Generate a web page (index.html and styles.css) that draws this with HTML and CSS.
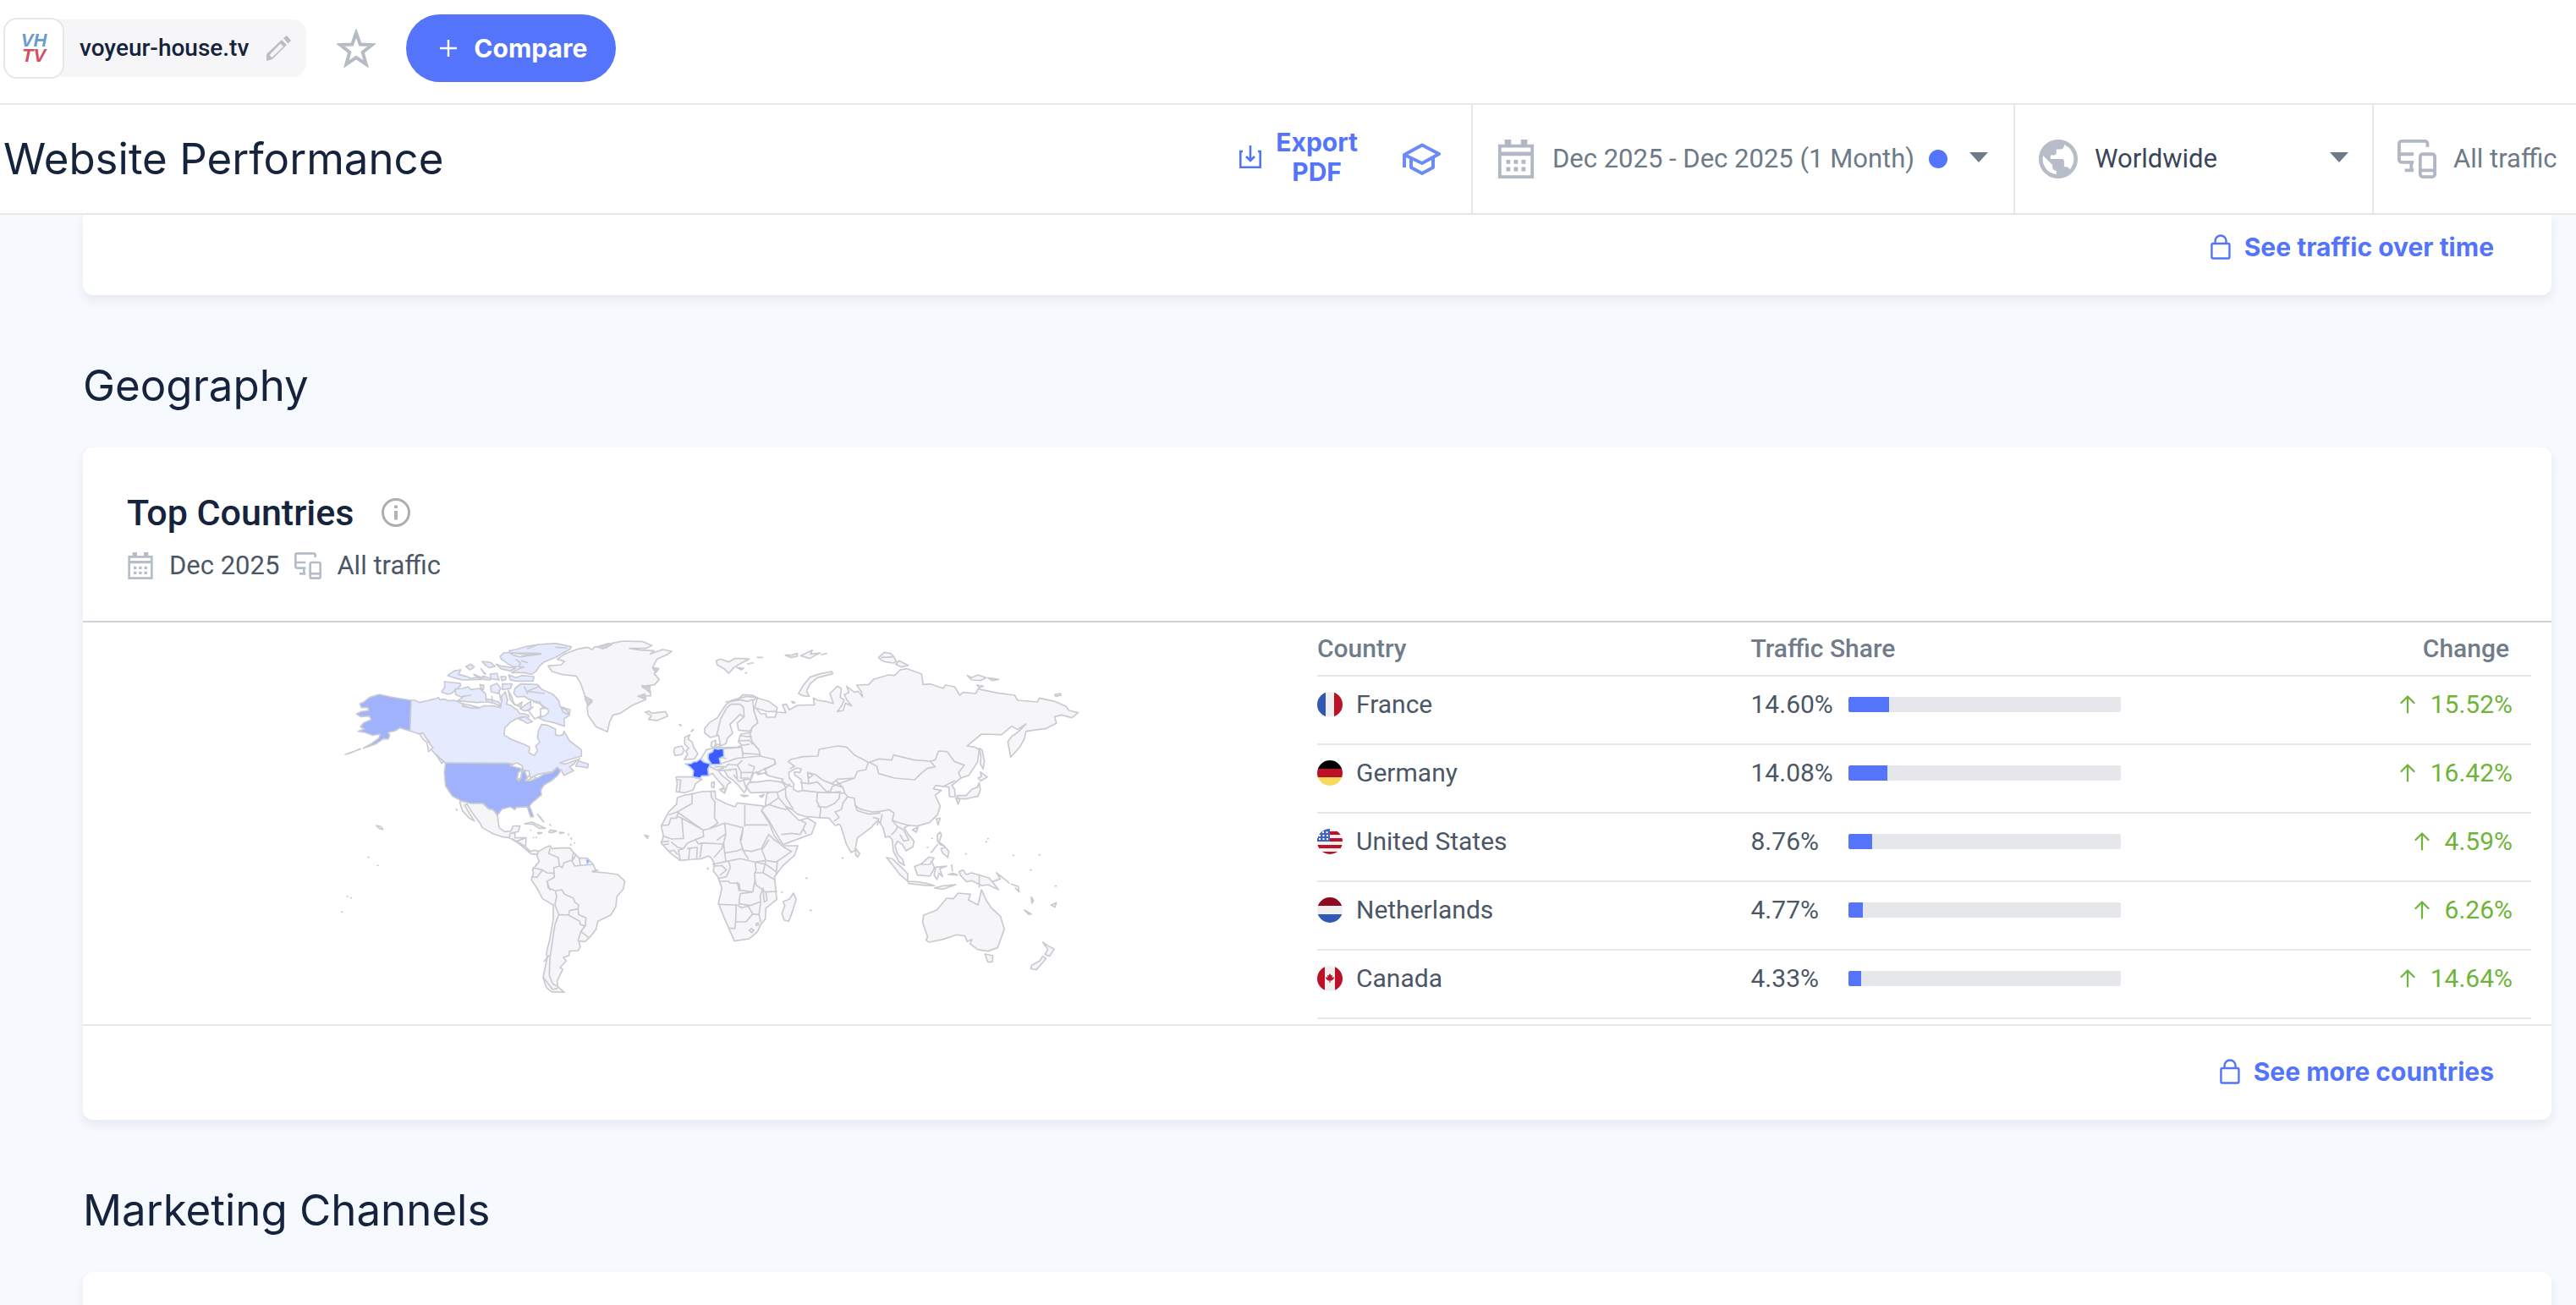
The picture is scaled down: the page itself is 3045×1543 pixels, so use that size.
FILE: index.html
```html
<!DOCTYPE html>
<html lang="en">
<head>
<meta charset="utf-8">
<meta name="viewport" content="width=device-width, initial-scale=1">
<title>Website Performance</title>
<link rel="stylesheet" href="styles.css">
</head>
<body>
<svg class="sprite" aria-hidden="true">
  <symbol id="i-calendar" viewBox="0 0 24 24"><path fill="currentColor" fill-rule="evenodd" d="M1 3h4V0h4v3h6V0h4v3h4v21H1zM3 5v2.500h18V5zM3 10v12h18V10zM6 12.500h2.500V15H6zm4.700 0h2.500V15h-2.500zm4.700 0h2.500V15h-2.500zM6 17h2.500v2.500H6zm4.700 0h2.500v2.500h-2.500zm4.700 0h2.500v2.500h-2.500z"/></symbol>
  <symbol id="i-devices" viewBox="0 0 24 24"><g fill="none" stroke="currentColor" stroke-width="2"><path d="M18.500 4.500V2.500a1.500 1.500 0 0 0-1.500-1.500H2.500A1.500 1.500 0 0 0 1 2.500v10A1.500 1.500 0 0 0 2.500 14H10M1 9h9M8.500 14v5M4.500 19H10"/><rect x="14" y="9" width="9" height="14" rx="1.500"/><path d="M14 19h9"/></g></symbol>
  <symbol id="i-lock" viewBox="0 0 24 30"><g fill="none" stroke="currentColor" stroke-width="2.400"><rect x="1.400" y="11" width="21" height="17.500" rx="1.500"/><path d="M5.500 11V8a6.500 6.500 0 0 1 13 0v3"/></g></symbol>
  <symbol id="i-up" viewBox="0 0 18 22"><path fill="none" stroke="currentColor" stroke-width="2.200" stroke-linecap="round" stroke-linejoin="round" d="M9 20.500V2M1.500 9 9 1.500 16.500 9"/></symbol>
  <symbol id="i-caret" viewBox="0 0 22 12"><path fill="currentColor" d="M0 0h22L11 12z"/></symbol>
</svg>

<div class="topbar">
  <div class="site">
    <span class="site-logo"><span class="logo-vh">VH</span><span class="logo-tv">TV</span></span>
    <span class="site-name">voyeur-house.tv</span>
    <button class="icon-btn" aria-label="Edit website">
      <svg class="pencil" viewBox="0 0 30 30"><path fill="#bbbdc1" fill-rule="evenodd" d="M1 30V22L19 5l6 6L8 28zM4.500 23l3 3L21 13l-3.500-3.500zM21 3l4-3 5 6-3.500 3.500z"/></svg>
    </button>
  </div>
  <button class="icon-btn" aria-label="Add to favorites">
    <svg class="star" viewBox="0 0 46 46"><path fill="none" stroke="#b6bcc5" stroke-width="4" d="M23 5l4.800 13.500 14 .5-11.100 8.700 4 14.300L23 34l-11.700 8 4-14.300L4.200 19l14-.5z"/></svg>
  </button>
  <button class="compare">
    <svg class="plus" viewBox="0 0 20 20"><path stroke="#fff" stroke-width="2.400" d="M10 0v20M0 10h20"/></svg>
    <span>Compare</span>
  </button>
</div>

<header class="header">
  <h1 class="title">Website Performance</h1>
  <button class="export">
    <svg class="download" viewBox="0 0 26 28"><path fill="none" stroke="currentColor" stroke-width="2.600" d="M4 7H1.300v18.700h23.400V7H22M13 0v18M8 13l5 5 5-5"/></svg>
    <span>Export<br>PDF</span>
  </button>
  <button class="icon-btn learn" aria-label="Learn more">
    <svg class="grad" viewBox="0 0 46 38"><path fill="none" stroke="#6b8cf5" stroke-width="4" stroke-linejoin="round" d="M3 14 24 2.500 44 13 24 24zM3 14v15M11 18v11l13 7 13-7V18"/></svg>
  </button>
  <div class="filter filter-date">
    <svg class="filter-icon" aria-hidden="true"><use href="#i-calendar"/></svg>
    <select class="filter-select" aria-label="Date range"><option>Dec 2025 - Dec 2025 (1 Month)</option></select>
    <span class="dot"></span>
    <svg class="caret"><use href="#i-caret"/></svg>
  </div>
  <div class="filter filter-country">
    <svg class="filter-icon" viewBox="2 2 20 20"><path fill="#b6bcc8" d="M12 2C6.480 2 2 6.480 2 12s4.480 10 10 10 10-4.480 10-10S17.520 2 12 2zm-1 17.930c-3.950-.49-7-3.850-7-7.930 0-.62.080-1.210.210-1.790L9 15v1c0 1.100.9 2 2 2v1.930zm6.900-2.540c-.26-.81-1-1.390-1.900-1.390h-1v-3c0-.55-.45-1-1-1H8v-2h2c.55 0 1-.45 1-1V7h2c1.100 0 2-.9 2-2v-.41c2.930 1.190 5 4.060 5 7.410 0 2.080-.8 3.970-2.100 5.390z"/></svg>
    <select class="filter-select dark grow" aria-label="Country"><option>Worldwide</option></select>
    <svg class="caret"><use href="#i-caret"/></svg>
  </div>
  <div class="filter filter-traffic">
    <svg class="filter-icon"><use href="#i-devices"/></svg>
    <select class="filter-select" aria-label="Traffic source"><option>All traffic</option></select>
  </div>
</header>

<main class="content">
  <section class="card card-cut">
    <a class="more" href="#traffic"><svg class="lock"><use href="#i-lock"/></svg>See traffic over time</a>
  </section>

  <h2 class="section-title">Geography</h2>
  <section class="card">
    <div class="card-head">
      <h3 class="card-title">Top Countries
        <svg class="info" viewBox="0 0 34 34"><circle cx="17" cy="17" r="15.500" fill="none" stroke="#adadad" stroke-width="3"/><path fill="#b3b3b3" d="M15 8.500h4v3.500h-4zM15 15h4v10.500h-4z"/></svg>
      </h3>
      <div class="card-meta">
        <svg class="meta-icon"><use href="#i-calendar"/></svg><span class="meta-date">Dec 2025</span>
        <svg class="meta-icon"><use href="#i-devices"/></svg><span>All traffic</span>
      </div>
    </div>
    <div class="card-body">
      <svg class="map" viewBox="98 736 1459 475" role="img" aria-label="Traffic by country">
        <g class="land" transform="translate(390 740) scale(.3333)">
          <path class="us" d="M288 264L250 258 215 252 175 243 140 254 118 272 106 276 112 290 134 290 138 300 112 304 94 312 108 322 140 320 146 332 120 344 108 358 122 366 100 374 124 378 150 388 178 384 174 398 150 416 118 434 160 420 190 400 206 402 212 388 206 378 232 372 248 362 284 373Z"/>
          <path d="M54 456L106 438 108 436 70 452Z"/>
          <path class="ca" d="M288 264L302 264 318 272 350 264 378 258 385 254 390 262 408 260 420 266 440 264 470 276 472 286 500 288 528 292 545 284 580 284 604 290 610 264 608 250 622 234 630 262 626 278 640 282 664 298 672 310 690 312 706 318 700 332 684 322 664 328 640 342 620 362 618 388 646 404 688 420 708 430 706 450 724 460 736 444 730 426 744 412 736 396 740 370 750 350 770 352 800 366 800 386 812 390 826 386 830 374 850 408 892 440 892 462 850 474 816 486 836 490 878 474 866 490 850 500 864 514 830 530 822 514 806 502 788 518 740 526 712 540 704 520 680 506 662 494 634 488 410 486 380 462 360 440 352 410 318 384 284 373Z"/>
          <path d="M318 382L330 380 356 420 366 432 350 446 344 414 330 402Z"/>
          <path class="us" d="M410 486L634 488 662 498 680 506 668 522 664 542 670 550 678 540 680 514 698 520 700 540 692 550 712 548 740 538 760 526 788 520 806 502 818 514 808 530 790 546 760 564 748 582 750 600 716 628 708 640 722 676 712 678 700 642 660 644 656 652 640 642 610 650 594 672 578 652 564 650 542 630 500 630 468 622 434 604 410 568 406 520Z"/>
          <path class="lake" d="M640 496L662 486 682 496 684 508 660 502ZM664 546L668 520 682 512 676 540ZM690 514L706 514 708 530 700 538ZM702 548L724 534 730 540 712 550Z"/>
          <path class="ca" d="M886 470L872 498 896 500 914 504 916 490 902 486 894 484 880 478ZM376 456L404 482 396 488ZM656 222L676 206 736 208 752 226 790 242 812 266 816 286 852 298 848 318 830 330 832 356 796 344 760 336 740 326 764 318 776 306 772 294 754 290 744 270 726 268 704 260 690 250 664 252 652 240ZM820 290L840 300 850 316 826 306ZM668 330L694 322 718 340 700 346 688 338ZM700 276L712 268 712 296 692 302 674 294ZM444 224L470 222 490 216 500 226 530 222 552 240 556 270 520 272 480 268 452 266 470 254 446 244ZM406 198L462 204 464 212 430 240 416 242 396 234 408 216ZM532 208L546 212 544 226 536 222ZM570 214L592 204 606 222 596 240 572 234ZM612 206L646 206 640 222 612 226ZM632 228L644 250 654 280 664 282 682 270 676 288 652 276 640 262ZM552 258L570 262 600 270 606 286 580 274 560 270ZM470 276L500 282 530 290 500 292 474 284ZM418 176L440 160 464 156 456 172 480 178 500 186 526 182 540 190 470 192 440 184ZM510 172L526 186 540 184ZM542 178L570 186 568 192 546 190ZM568 172L592 168 600 192 572 188ZM606 180L624 180 624 190 610 194ZM634 174L660 184 680 176 724 180 720 196 660 196 640 192ZM482 144L500 136 512 146 496 156ZM540 126L570 130 586 144 564 148 552 140ZM536 152L552 172 546 168ZM590 136L606 142 660 150 640 160 606 152ZM640 96L636 88 660 84 700 72 740 66 800 62 856 74 852 82 800 112 760 128 742 144 732 160 716 172 690 166 644 166 670 152 688 146 650 144 630 134 608 118 604 108 616 96 636 94 650 104 674 110 748 100 690 102Z"/>
          <path class="line" d="M640 96L690 96 748 98 680 108M660 120L676 132 670 144M700 130L680 124M740 66L700 80M800 76L840 78M690 216L700 240M740 216L700 232 760 240M470 250L500 246M722 270L744 276 768 292 746 294 748 320 726 330 704 300 720 288M574 250L576 270M600 236L606 264"/>
          <path d="M774 142L820 138 832 126 806 118 832 100 880 82 912 76 930 84 940 74 980 78 1000 62 1040 54 1110 56 1142 70 1120 80 1062 80 1100 86 1150 88 1136 100 1180 84 1212 90 1196 102 1160 118 1144 148 1164 152 1150 170 1168 190 1152 208 1128 212 1108 218 1136 230 1138 248 1096 250 1120 262 1072 282 1030 310 1004 316 992 340 984 376 944 358 916 318 912 286 930 270 906 264 904 246 890 206 874 178 820 172 788 162ZM1118 306L1132 302 1140 310 1190 304 1198 320 1160 336 1130 332 1140 320Z"/>
          <path class="blot" d="M950 74L990 62 1000 66 968 82ZM1106 212L1136 216 1132 234ZM1092 250L1116 242 1120 256ZM904 250L930 264 914 282ZM1146 152L1166 152 1156 166Z"/>
          <path d="M460 624L468 622 500 630 542 630 564 650 578 652 594 672 600 716 620 730 642 728 650 710 674 710 668 730 650 734 636 752 610 748 580 738 540 716 534 702 500 656 486 632 478 636 494 664 512 692 494 682 470 656Z"/>
          <path d="M636 752L640 736 656 734 656 752 696 752 694 784 710 800 726 796 740 800 738 812 712 808 686 786 664 768ZM648 756L662 764 694 752M668 768L694 784"/>
          <path d="M690 702L716 696 764 718 742 718 720 704ZM776 732L782 724 804 728 786 734ZM736 734L752 734 742 738ZM814 732L830 734 816 736ZM736 668L756 694M744 676L758 696M846 738v4M856 752v5M854 774v4M868 769v2M722 750v2M732 749v2M712 724v1M780 705l2 3M448 650l3 4"/>
          <path d="M740 800L764 786 780 780 788 790 820 788 852 788 864 804 884 824 912 824 934 846 942 866 930 872 980 876 1020 882 1046 906 1040 934 1018 960 1014 996 996 1026 950 1048 944 1076 922 1104 904 1120 882 1118 888 1138 880 1152 850 1154 848 1170 828 1176 838 1188 816 1212 826 1218 806 1260 808 1280 832 1300 786 1298 768 1284 756 1248 770 1180 768 1160 780 1110 792 1040 792 990 754 968 734 930 714 900 722 876 718 866 742 836 734 814Z"/>
          <path class="line" d="M780 790L776 808 810 822 814 852 794 858 796 892M720 858L754 866 770 876 796 878M754 866L734 892 716 890M864 804L858 832 830 840 824 858 814 852M858 832L868 852 934 846M884 824L888 850M870 816L862 830M796 892L770 906 774 930 800 940 804 960 798 990M770 906L780 936M800 940L822 936 832 952 864 966 868 980 882 990 880 1004 850 1010 846 1026 812 1024 798 990M880 1004L882 1024 908 1036 906 1064 888 1060 886 1048 846 1026M812 1024L798 1060 792 1100 780 1180 778 1240 790 1270 808 1280M906 1064L890 1084 918 1106M890 1084L880 1116M934 872L950 866M760 1190L776 1170M756 1246L790 1290 806 1286"/>
          <path class="hot" d="M910 826L920 834 912 846Z"/>
          <path d="M164 708L180 712 188 722 176 720ZM135 821h3M168 850h3M60 960h3M74 965h2M42 1015h3M1116 742L1130 746 1126 754ZM1240 350l6 4M1282 374l6-6M1340 860v3"/>
        </g>
        <g class="land" transform="translate(760 740) scale(.338 .3333)">
          <path d="M146 396L164 386 158 402 172 412 178 432 192 454 180 472 144 474 156 456 150 444 160 434 146 420ZM112 432L136 426 144 442 136 456 112 460 108 444Z"/>
          <path d="M116 536L172 536 206 544 184 560 176 582 146 592 116 588 120 560ZM120 546L132 546 128 588"/>
          <path d="M202 472L222 440 250 432 330 430 346 424 334 410 342 384 390 376 384 414 406 440 410 460 464 474 460 492 424 508 430 518 460 532 436 542 400 520 384 524 376 544 352 546 362 580 354 592 334 566 316 548 296 534 284 512 264 514 276 530 308 556 296 562 288 588 272 580 284 572 256 540 244 524 226 530 220 490Z"/>
          <path d="M240 412L254 406 254 420 248 434 238 426ZM256 420L268 420 266 430 256 430ZM240 556L250 554 248 574 240 572ZM268 580L288 578 286 594ZM342 600L368 602 354 606ZM408 604L424 598 416 608Z"/>
          <path d="M216 364L232 344 260 326 290 280 310 264 362 250 400 254 384 266 388 300 402 344 372 374 334 370 330 344 352 324 340 314 304 350 314 380 296 398 290 418 272 426 264 388 236 396 216 380Z"/>
          <path class="line" d="M258 388L272 330 294 290 308 278 340 278 352 290 354 324M308 268L340 262 366 268 384 262M290 270L330 262 350 244 384 246 400 258"/>
          <path d="M400 256L440 268 470 290 466 304 434 304 396 292 412 312 430 312 432 324 462 324 468 306 500 308 488 280 502 278 512 298 540 282 600 280 596 256 610 264 640 268 666 276 654 240 680 214 694 222 690 254 704 262 694 286 680 304 700 300 708 274 730 284 714 264 704 244 720 236 712 214 740 236 752 232 768 252 764 234 748 210 790 208 806 190 858 174 880 176 900 156 924 152 974 170 980 208 1006 206 1050 222 1058 210 1090 216 1108 246 1120 236 1164 240 1172 224 1240 238 1300 246 1310 264 1380 270 1386 256 1440 268 1480 286 1490 300 1522 308 1500 326 1464 316 1440 322 1446 346 1410 364 1340 374 1334 400 1318 430 1286 466 1276 410 1290 392 1312 376 1340 348 1310 368 1290 356 1254 386 1184 384 1134 426 1160 430 1176 440 1170 484 1140 530 1112 540 1080 566 1090 580 1092 606 1072 606 1070 572 1050 570 1024 566 1016 578 1044 584 1022 600 1040 640 1030 670 1002 698 960 710 930 708 914 716 928 740 948 764 944 784 920 798 908 776 890 764 882 780 890 810 908 828 914 850 896 838 876 800 872 760 862 746 848 750 840 716 822 690 806 706 800 714 750 752 742 796 728 804 712 776 692 710 686 704 672 708 650 682 610 680 566 676 540 668 520 650 500 644 524 668 546 690 576 682 604 700 590 738 490 776 480 760 440 690 414 652 428 640 432 600 440 590 376 592 362 570 370 556 400 552 420 544 486 550 500 562 440 536 424 510 464 490 460 474 410 462 406 440 384 414 374 390 382 360 402 344 388 300Z"/>
          <path class="sea" d="M386 524L398 518 402 528 424 522 440 532 490 544 484 554 440 548 400 554 374 554ZM398 522L424 508 432 518 418 524ZM510 520L538 504 554 508 548 520 530 518 530 528 554 546 558 584 542 588 526 580 528 560 512 540ZM576 520L580 540 594 530Z"/>
          <path class="line" d="M516 506L530 498 508 482 516 474 560 464 612 462 616 438 682 426 712 430 740 458 788 484 780 510 750 516 740 540 680 544 660 560 630 548 604 528 576 520 580 560 552 556M792 484L826 472 870 476 876 458 950 476 1004 480 1022 500 994 506 970 526 950 546 880 540 824 524 818 498 792 484M1022 476L1004 480M1022 476L1034 444 1064 446 1090 482 1124 494 1104 520 1112 540M580 560L610 554 642 588 656 586 662 570 696 556 740 540M660 560L700 574 706 594 656 590M700 574L676 550M558 584L610 590 608 622 622 650 618 680M610 590L650 592 690 588 686 612 670 630 640 644 612 640M706 594L716 606 700 628 694 652 672 660 686 680 670 692M716 606L740 612 742 636 760 650 800 660 830 658 860 652 878 664 872 690 900 700 930 708M742 636L750 656 790 668 828 664M806 680L824 684 820 706M836 670L830 700M872 690L890 712 884 726 870 740M890 712L912 724 930 760 912 764 900 742M1050 570L1090 550M512 562L498 576 500 608 524 648M490 556L500 576 470 590 440 590M470 590L474 610 440 634 428 640M474 610L500 640 520 650M440 634L470 644 500 652M486 740L520 736 550 740 570 700 552 690M570 736L560 720M500 562L520 570"/>
          <path class="line" d="M270 490L300 480 328 470 346 468 410 462M280 436L346 430M346 430L350 468M290 470L270 466M300 492L330 494 346 478M330 494L344 520 384 520M300 510L326 508 330 540M344 520L342 540 370 540M342 390L380 394M336 408L372 406 384 420M346 436L350 452 410 456M252 500L290 500 300 490M370 492L390 500 384 520M284 512L306 512M346 424L372 420M318 530L336 552 352 548M236 500L260 512 282 504"/>
          <path d="M256 124L270 118 300 128 320 116 352 116 372 118 340 134 318 148 300 168 284 152 260 138ZM328 148L352 150 344 156ZM400 112L418 112M366 134l6 2M376 132h10M358 168l4-2M498 104L520 104 540 98 540 108 516 112ZM552 106L580 92 592 86 586 100 620 96 600 106 584 116ZM624 102L642 98M824 112L844 94 866 98 878 110 886 126 876 132 850 128 834 122ZM884 136L896 124 928 140 904 146ZM834 112L876 110M544 240L560 212 584 182 620 170 660 162 664 170 610 184 584 206 572 232 582 250 560 248ZM1134 176L1150 184 1172 174 1200 184 1180 194 1150 192ZM1206 184L1244 190 1220 194ZM1168 210L1190 214 1176 220ZM1440 244L1460 240 1462 246 1444 250ZM520 268L532 272 524 274Z"/>
          <path d="M1176 434L1186 440 1194 480 1190 508 1180 490 1182 462ZM1180 518L1204 536 1182 550 1172 540 1184 534ZM1176 556L1180 582 1172 604 1146 610 1128 614 1104 612 1098 602 1130 602 1150 580 1170 572ZM1094 610L1108 616 1102 632ZM1026 684L1040 682 1032 706ZM942 724L962 714 956 732ZM1030 740L1040 732 1044 742 1036 768 1056 782 1040 776 1030 764ZM1042 790L1058 786 1070 800 1066 822 1048 806ZM1008 804L1030 776M744 790L758 808 750 820 744 812Z"/>
          <path d="M852 822L872 826 910 862 926 880 926 906 900 884 874 850ZM926 906L960 908 994 914 1020 922 980 920 930 914ZM1020 930L1050 922 1094 918 1050 934ZM950 854L974 844 1000 820 1018 824 1010 836 1020 858 1004 888 960 884ZM974 846L1004 846 1010 834M1024 856L1062 852 1038 862 1048 890 1036 878 1028 900 1018 884ZM1068 882L1100 884 1084 878ZM1080 848L1082 870M1106 872L1120 866 1130 882 1150 876 1210 894 1222 908 1244 936 1206 918 1186 922 1150 904 1132 908 1110 884ZM1176 884V926M1222 908L1250 898 1238 878M1236 876L1262 896 1280 912M1288 916L1312 924 1316 944 1302 930M1358 962L1366 974 1360 984ZM1334 1008L1358 1022 1350 1024ZM1428 990L1446 982 1440 998Z"/>
          <path d="M982 1026L1028 1008 1062 966 1086 968 1102 948 1146 952 1138 972 1172 990 1184 936 1200 972 1218 1000 1250 1030 1264 1076 1240 1142 1206 1154 1170 1148 1144 1128 1150 1112 1134 1120 1126 1100 1096 1096 1050 1112 1000 1122 990 1114 996 1104 978 1052ZM1196 1164L1224 1170 1222 1192 1206 1192ZM1398 1122L1418 1136 1438 1146 1422 1172 1406 1166 1416 1148ZM1398 1172L1410 1180 1390 1204 1376 1220 1356 1216 1360 1204 1388 1188Z"/>
          <path d="M146 600L160 598 206 588 252 586 254 612 290 630 322 642 330 628 412 638 424 640 414 656 442 700 458 742 486 780 542 780 530 814 490 850 460 890 468 970 430 1002 428 1040 412 1060 400 1086 372 1110 320 1118 300 1072 286 1040 264 984 276 930 262 890 246 870 250 844 240 824 228 816 206 826 176 828 130 832 96 806 76 784 64 770 72 746 64 710 90 660 118 632 120 610Z"/>
          <path class="line" d="M172 598L172 630 120 660 92 670M120 660L210 724 232 720 286 700 350 716M122 664L118 682 98 682 90 706 66 708M118 676L136 682 142 754 100 756 72 746M136 682L210 724 212 748 184 758 156 770 142 790 122 786 100 768M238 590L240 610 252 624 250 680 262 700M356 638V710M356 706H436M350 720L340 760 350 796 380 800 414 790 440 740M286 700L290 740 282 770 286 806 330 798 350 790M184 758L194 774 206 770 280 774M206 770L200 820M190 786L188 824M164 788L160 826M142 790L124 796 130 830M156 790L186 786M280 774L276 790 250 820M286 806L290 836 244 846M290 836L340 826 392 838 430 832 466 838 520 800 490 784M350 796L368 826M414 790L430 832M440 740L460 760 484 776M440 760L420 790M300 836L306 856 292 890 264 896M250 852L276 850 292 866 270 884M392 838L396 866 390 880 392 900 384 944 340 938 336 914 304 912 300 906 270 906M392 838L430 846 466 872M470 838L466 880M430 832L420 876 396 876M420 876L460 900M392 900L396 920 430 944 468 942M384 944L340 950 336 986 376 992 412 978 410 958 420 930M264 988L330 990 344 1000 370 994M326 994L324 1050 322 1074 304 1072M324 1050L360 1050 384 1022 368 994M384 1022L406 1024 412 978M406 1024L412 1050M420 930L424 980 434 974 430 944M372 1080L380 1074 388 1080 380 1088ZM64 766L90 764M74 776L90 774M92 800L108 796 120 810M286 740L260 760M344 760L350 720M262 700L232 720M330 910L336 940M396 1056l8-2v8h-8z"/>
          <path d="M526 948L536 970 524 1010 510 1048 494 1044 486 1020 496 992 490 978 512 970Z"/>
          <path d="M697 824h3M570 895h4M484 945h4M585 1009h4M1128 809h2M1200 767l2-2M1206 755h2M1294 814h3M1385 812h3M1355 866h3M1442 923h3M1010 754h2M994 786h4M128 350l6 4M170 374l6-6M226 861h3"/>
          <path class="hot" d="M148 489L168 489 178 482 188 482 200 472 214 484 236 490 227 508 230 532 206 532 200 540 174 536 177 514 164 500ZM229 454L244 446 248 434 262 438 281 435 283 462 267 470 272 491 240 492 228 472Z"/>
        </g>
      </svg>
      <div class="table-wrap">
        <table class="countries">
          <colgroup><col class="c-country"><col class="c-share"><col></colgroup>
          <thead><tr><th>Country</th><th>Traffic Share</th><th class="th-change">Change</th></tr></thead>
          <tbody>
            <tr><td><span class="cell"><svg class="flag" viewBox="0 0 30 30"><clipPath id="disc"><circle cx="15" cy="15" r="15"/></clipPath><g clip-path="url(#disc)"><path fill="#f0f0f0" d="M0 0h30v30H0z"/><path fill="#3158b5" d="M0 0h10v30H0z"/><path fill="#bd1128" d="M20 0h10v30H20z"/></g></svg>France</span></td>
              <td><span class="cell"><span class="pct">14.60%</span><span class="bar"><span class="fill" style="width:15%"></span></span></span></td>
              <td><span class="cell up"><svg class="arrow"><use href="#i-up"/></svg>15.52%</span></td></tr>
            <tr><td><span class="cell"><svg class="flag" viewBox="0 0 30 30"><g clip-path="url(#disc)"><path d="M0 0h30v10H0z"/><path fill="#bd1128" d="M0 10h30v10H0z"/><path fill="#f7da5c" d="M0 20h30v10H0z"/></g></svg>Germany</span></td>
              <td><span class="cell"><span class="pct">14.08%</span><span class="bar"><span class="fill" style="width:14.5%"></span></span></span></td>
              <td><span class="cell up"><svg class="arrow"><use href="#i-up"/></svg>16.42%</span></td></tr>
            <tr><td><span class="cell"><svg class="flag" viewBox="0 0 30 30"><g clip-path="url(#disc)"><path fill="#f0f0f0" d="M0 0h30v30H0z"/><path fill="#bd1128" d="M0 3h30v4H0zM0 11h30v4H0zM0 19h30v4H0zM0 27h30v4H0z"/><path fill="#3f63bf" d="M0 0h15v15H0z"/><path stroke="#fff" stroke-width="2" stroke-dasharray="2 2.500" d="M2 8h12M2 12h12M6 4h8"/></g></svg>United States</span></td>
              <td><span class="cell"><span class="pct">8.76%</span><span class="bar"><span class="fill" style="width:9%"></span></span></span></td>
              <td><span class="cell up"><svg class="arrow"><use href="#i-up"/></svg>4.59%</span></td></tr>
            <tr><td><span class="cell"><svg class="flag" viewBox="0 0 30 30"><g clip-path="url(#disc)"><path fill="#f0f0f0" d="M0 0h30v30H0z"/><path fill="#8e0a20" d="M0 0h30v10H0z"/><path fill="#3158b5" d="M0 20h30v10H0z"/></g></svg>Netherlands</span></td>
              <td><span class="cell"><span class="pct">4.77%</span><span class="bar"><span class="fill" style="width:5.3%"></span></span></span></td>
              <td><span class="cell up"><svg class="arrow"><use href="#i-up"/></svg>6.26%</span></td></tr>
            <tr><td><span class="cell"><svg class="flag" viewBox="0 0 30 30"><g clip-path="url(#disc)"><path fill="#f0f0f0" d="M0 0h30v30H0z"/><path fill="#bd1128" d="M0 0h9v30H0zM21 0h9v30h-9zM15 9l1.500 2.500 1.500-.5-.5 3 2.500-1-.5 2.500-2.500 2h-1.500V20h-1v-2.500H13l-2.500-2-.5-2.500 2.500 1-.5-3 1.500.5z"/></g></svg>Canada</span></td>
              <td><span class="cell"><span class="pct">4.33%</span><span class="bar"><span class="fill" style="width:4.7%"></span></span></span></td>
              <td><span class="cell up"><svg class="arrow"><use href="#i-up"/></svg>14.64%</span></td></tr>
          </tbody>
        </table>
      </div>
    </div>
    <div class="card-foot">
      <a class="more" href="#countries"><svg class="lock"><use href="#i-lock"/></svg>See more countries</a>
    </div>
  </section>

  <h2 class="section-title">Marketing Channels</h2>
  <section class="card card-next"></section>
</main>
</body>
</html>
```
FILE: styles.css
```css
* { box-sizing: border-box; }
body {
  display: flex;
  flex-direction: column;
  min-height: 100vh;
  margin: 0;
  background: #f6f9fe;
  color: #4b5666;
  font: 30px/36px Roboto, "Liberation Sans", sans-serif;
}
h1, h2, h3 { margin: 0; }
button, select { font: inherit; color: inherit; border: 0; padding: 0; background: none; cursor: pointer; }
svg { display: block; flex: none; }
.sprite { width: 0; height: 0; position: absolute; }

.topbar {
  display: flex;
  align-items: center;
  height: 124px;
  padding: 0 4px 8px;
  background: #fff;
  border-bottom: 2px solid #e6e7e9;
}
.site {
  display: flex;
  align-items: center;
  height: 68px;
  padding-right: 18px;
  margin-right: 36px;
  border-radius: 16px;
  background: #f6f6f8;
}
.site-logo {
  display: flex;
  flex-direction: column;
  justify-content: center;
  align-items: center;
  width: 72px;
  height: 72px;
  border: 2px solid #e6e7e9;
  border-radius: 16px;
  background: #fff;
  font: italic 700 22px/18px "Liberation Sans", sans-serif;
}
.logo-vh { color: #6c9bd0; }
.logo-tv { color: #d3505f; }
.site-name {
  margin: 0 20px 0 18px;
  color: #15233c;
  font-size: 28px;
  font-weight: 500;
}
.pencil { width: 30px; height: 30px; }
.star { width: 46px; height: 46px; }
.compare {
  display: flex;
  align-items: center;
  gap: 20px;
  height: 80px;
  margin-left: 36px;
  padding: 0 34px 0 40px;
  border-radius: 40px;
  background: #5374fb;
  color: #fff;
  font: 700 30px/36px Inter, "Open Sans", sans-serif;
}
.plus { width: 20px; height: 20px; }

.header {
  display: flex;
  height: 130px;
  background: #fff;
  border-bottom: 2px solid #e6e7e9;
}
.title, .section-title {
  color: #15233c;
  font: 400 51px/64px Inter, "Open Sans", sans-serif;
}
.title { flex: 1; align-self: center; padding-left: 4px; }
.export {
  display: flex;
  align-items: center;
  gap: 16px;
  padding-bottom: 4px;
  color: #5374fb;
  font: 700 30px/35px Inter, "Open Sans", sans-serif;
}
.download { width: 28px; height: 28px; }
.learn { padding: 0 36px 0 52px; }
.grad { width: 46px; height: 38px; }
.filter {
  display: flex;
  align-items: center;
  border-left: 2px solid #e6e7e9;
  padding-left: 28px;
  color: #6d7a88;
}
.filter-date { flex: 0 0 641px; }
.filter-country { flex: 0 0 424px; padding-right: 28px; }
.filter-traffic { flex: 0 0 241px; }
.filter-icon { width: 46px; height: 46px; margin-right: 20px; color: #b1b7c4; }
.filter-select { appearance: none; outline: 0; font-size: 31px; line-height: 40px; }
.filter-select.dark { color: #3a4658; }
.grow { flex: 1; }
.dot { width: 22px; height: 22px; margin: 0 26px 0 16px; border-radius: 50%; background: #5374fb; }
.caret { width: 22px; height: 12px; margin-bottom: 4px; color: #6d7a88; }

.content {
  display: flex;
  flex-direction: column;
  flex: 1;
  padding: 0 29px 0 98px;
}
.card {
  border-radius: 12px;
  background: #fff;
  box-shadow: 0 6px 12px rgba(40, 50, 90, .08);
}
.card-cut {
  height: 95px;
  padding: 16px 68px 0 0;
  border-radius: 0 0 12px 12px;
}
.more {
  display: flex;
  justify-content: flex-end;
  align-items: center;
  gap: 16px;
  color: #5374fb;
  font: 700 30px/44px Inter, "Open Sans", sans-serif;
  text-decoration: none;
}
.lock { width: 24px; height: 30px; }
.section-title { padding: 75px 0 41px; }
.card-head {
  height: 207px;
  padding: 50px 52px 0;
  border-bottom: 2px solid #cfd0d8;
}
.card-title {
  display: flex;
  align-items: center;
  gap: 32px;
  color: #15233c;
  font-size: 43px;
  font-weight: 500;
  line-height: 54px;
}
.info { width: 34px; height: 34px; }
.card-meta {
  display: flex;
  align-items: center;
  gap: 18px;
  padding-top: 18px;
  font-size: 31px;
}
.meta-icon { width: 32px; height: 32px; color: #b6bcc8; }
.card-body { display: grid; grid-template-columns: 1fr 1fr; }
.map { width: 100%; }
.land { fill: #f6f6f8; stroke: #cacbd1; stroke-width: 5; stroke-linejoin: round; stroke-linecap: round; }
.us { fill: #9fb2fb; }
.ca { fill: #e6eafe; }
.hot { fill: #3d5bff; stroke: #b9cdf8; }
.lake, .sea { fill: #fff; }
.line { fill: none; }
.blot { fill: #d0d3d8; }

.table-wrap { padding: 0 24px 6px 0; }
.countries { width: 100%; border-collapse: separate; border-spacing: 0; table-layout: fixed; }
.c-country { width: calc(100% * 5 / 14); }
.c-share { width: calc(100% * 5 / 14); }
th {
  height: 64px;
  padding: 0;
  border-bottom: 2px solid #e6e7ea;
  color: #717c8b;
  font-weight: 500;
  text-align: left;
}
th.th-change { padding-right: 26px; text-align: right; }
td {
  height: 81px;
  padding: 0 0 14px;
  border-bottom: 2px solid #e6e7ea;
}
.cell { display: flex; align-items: center; }
.flag { width: 30px; height: 30px; margin-right: 16px; }
.pct { width: 115px; }
.bar { width: 322px; height: 18px; border-radius: 2px; background: #e6e7eb; overflow: hidden; }
.fill { display: block; height: 100%; background: #5374fb; }
.up { justify-content: flex-end; gap: 18px; padding-right: 22px; color: #6fb43a; }
.arrow { width: 18px; height: 22px; }
.card-foot {
  height: 113px;
  padding: 32px 68px 0 0;
  border-top: 2px solid #e6e7ea;
}
.card-next { flex: 1; min-height: 24px; border-radius: 12px 12px 0 0; }
```
